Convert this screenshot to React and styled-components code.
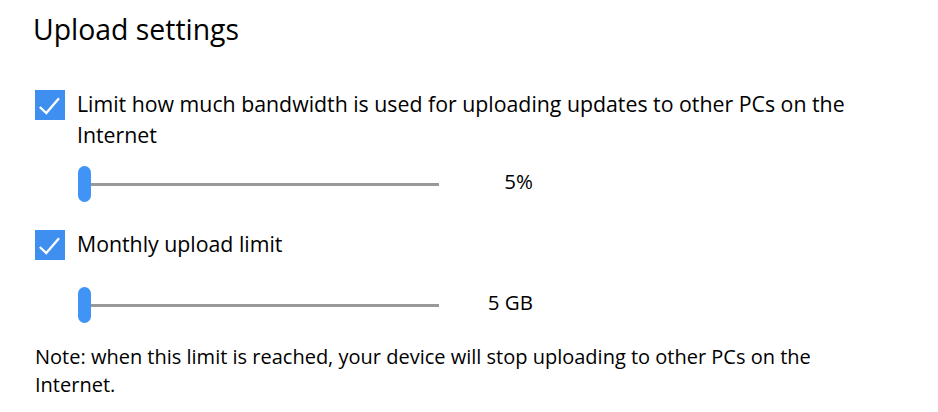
import React from "react";
import styled, { createGlobalStyle } from "styled-components";

const Global = createGlobalStyle`
  html, body { margin: 0; padding: 0; background: #ffffff; }
  body { font-family: "Open Sans", "Noto Sans", sans-serif; color: #000; }
`;

const Page = styled.div`
  width: 938px;
  height: 412px;
  box-sizing: border-box;
  padding: 11px 0 0 33px;
  display: flex;
  flex-direction: column;
`;

const Heading = styled.h1`
  margin: 0;
  font-size: 28.4px;
  font-weight: 400;
  line-height: 36px;
`;

const CheckRow = styled.label`
  display: flex;
  align-items: flex-start;
  gap: 12px;
  margin-top: ${(p) => p.$top}px;
  padding-left: 2px;
`;

const Box = styled.span`
  flex: 0 0 auto;
  width: 30px;
  height: 30px;
  background: #3f8ff0;
  display: flex;
  align-items: center;
  justify-content: center;
`;

const Label = styled.span`
  font-size: 21.3px;
  line-height: 31px;
  max-width: 800px;
  margin-top: -2px;
`;

const SliderRow = styled.div`
  display: flex;
  align-items: center;
  padding-left: 45px;
  height: 36px;
  margin-top: ${(p) => p.$top}px;
`;

const Track = styled.div`
  position: relative;
  width: 361px;
  height: 36px;
  display: flex;
  align-items: center;
`;

const Rail = styled.div`
  flex: 1;
  height: 3px;
  background: #999999;
  margin-left: 6px;
`;

const Thumb = styled.div`
  position: absolute;
  left: 0;
  top: 0;
  width: 13px;
  height: 36px;
  border-radius: 7px;
  background: #3f94f5;
`;

const Value = styled.span`
  width: 94px;
  text-align: right;
  font-size: 20.5px;
  line-height: 28px;
  margin-bottom: 6px;
`;

const Note = styled.p`
  margin: 20px 0 0 2px;
  font-size: 20px;
  line-height: 28px;
  max-width: 790px;
`;

const Check = () => (
  <svg width="30" height="30" viewBox="0 0 30 30">
    <path d="M4.8 17 L11.3 23 L24 8.2" fill="none" stroke="#fff" strokeWidth="2.3" />
  </svg>
);

const Slider = ({ top, value }) => (
  <SliderRow $top={top}>
    <Track>
      <Rail />
      <Thumb />
    </Track>
    <Value>{value}</Value>
  </SliderRow>
);

export default function App() {
  return (
    <>
      <Global />
      <Page>
        <Heading>Upload settings</Heading>
        <CheckRow $top={43}>
          <Box><Check /></Box>
          <Label>
            Limit how much bandwidth is used for uploading updates to other PCs on the Internet
          </Label>
        </CheckRow>
        <Slider top={16} value="5%" />
        <CheckRow $top={28}>
          <Box><Check /></Box>
          <Label>Monthly upload limit</Label>
        </CheckRow>
        <Slider top={27} value="5 GB" />
        <Note>
          Note: when this limit is reached, your device will stop uploading to other PCs on the Internet.
        </Note>
      </Page>
    </>
  );
}
